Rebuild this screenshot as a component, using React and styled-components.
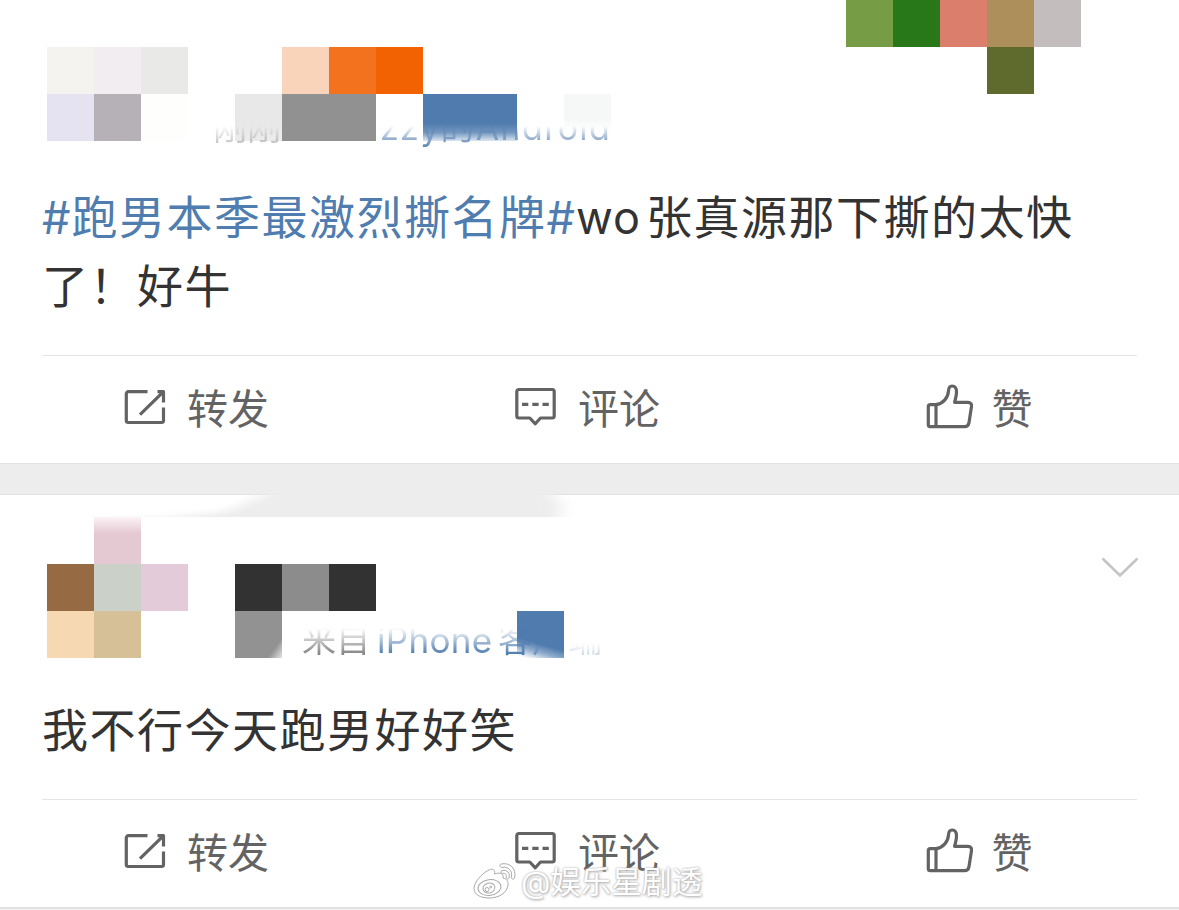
import styled, { createGlobalStyle } from 'styled-components';

const GlobalStyle = createGlobalStyle`
  * {
    box-sizing: border-box;
  }
  body {
    margin: 0;
    background: #fff;
    font-family: Inter, 'Noto Sans CJK SC', sans-serif;
    color: #333;
  }
`;

const Feed = styled.main`
  position: relative;
  width: 1179px;
  height: 910px;
  overflow: hidden;
  background: #fff;
`;
const Post = styled.article`
  display: flex;
  flex-direction: column;
`;
const Divider = styled.div`
  height: 32px;
  background: #ededed;
  border-top: 1px solid #e2e2e2;
  border-bottom: 1px solid #e2e2e2;
`;
const BottomEdge = styled.div`
  height: 4px;
  background: #f2f2f2;
  border-top: 2px solid #e2e2e2;
`;

const Header = styled.header`
  position: relative;
  height: ${(props) => props.$height}px;
  padding-top: ${(props) => props.$top || 0}px;
`;
const Mosaic = styled.div`
  display: grid;
  grid-template-columns: repeat(25, 47px);
  grid-template-rows: repeat(3, 47px);
`;
const Cell = styled.span`
  grid-column: ${(props) => props.$col} / span ${(props) => props.$span || 1};
  grid-row: ${(props) => props.$row};
  background: ${(props) => props.$color};
`;
const Smudge = styled.div`
  position: absolute;
  top: -1px;
  left: 0;
  width: 600px;
  height: 23px;
  overflow: hidden;

  svg {
    display: block;
  }
`;
const Source = styled.div`
  position: absolute;
  top: ${(props) => props.$top}px;
  left: ${(props) => props.$left}px;
  display: flex;
  height: 40px;
  line-height: 40px;
  font-size: 34px;
  white-space: pre;
  color: #858585;
  mask-image: linear-gradient(
    to bottom,
    transparent ${(props) => props.$from}px,
    #000 ${(props) => props.$to}px
  );
`;
const SourcePart = styled.span`
  width: ${(props) => props.$width}px;
  font-size: ${(props) => props.$size || 34}px;
  color: ${(props) => (props.$link ? '#4f7bae' : 'inherit')};
  opacity: ${(props) => props.$opacity ?? 1};
  letter-spacing: ${(props) => props.$spacing || 0}px;
`;
const FadedPart = styled(SourcePart)`
  mask-image: linear-gradient(to bottom, transparent 22px, #000 40px);
`;
const Menu = styled.button`
  position: absolute;
  top: 60px;
  right: 39px;
  padding: 0;
  border: 0;
  background: none;

  svg {
    display: block;
  }
`;

const Text = styled.p`
  margin: 0 42px;
  padding-bottom: ${(props) => props.$bottom}px;
  border-bottom: 1px solid #e4e4e4;
  font-size: 46px;
  line-height: 69px;
  letter-spacing: 1.5px;
  white-space: nowrap;
`;
const Topic = styled.a`
  color: #507daf;
`;
const Latin = styled.span`
  margin-right: ${(props) => props.$after || 0}px;
  font-size: 45px;
  letter-spacing: 1px;
`;

const Actions = styled.footer`
  display: grid;
  grid-template-columns: repeat(3, 391px);
  height: 107px;
  padding: 0 0 5px 1px;
`;
const Action = styled.button`
  display: flex;
  align-items: center;
  justify-content: center;
  gap: ${(props) => props.$gap || 21}px;
  padding: 0;
  border: 0;
  background: none;
  color: #636363;
  font-family: inherit;
  font-size: 41px;
  line-height: 56px;

  svg {
    fill: none;
    stroke: currentColor;
    stroke-width: 3.2;
    stroke-linejoin: round;
  }
`;
const ActionLabel = styled.span`
  padding-top: 3px;
`;

const Watermark = styled.div`
  position: absolute;
  left: 472px;
  top: 861px;
  display: flex;
  align-items: center;
  gap: 3px;
  height: 42px;
  font-size: 30.4px;
  line-height: 42px;
  color: #fff;
  text-shadow: 0 0 2px #aaa, 1px 1px 3px #aaa;
`;

const RepostIcon = () => (
  <svg width="42" height="38" viewBox="0 0 42 38">
    <path d="M23.5 3.7H4.3a2 2 0 0 0-2 2v26.8a2 2 0 0 0 2 2h33.2a2 2 0 0 0 2-2V19.5" />
    <path d="M33.5 3.7h6v10.8M39 4.2 16 26.7" />
  </svg>
);

const CommentIcon = () => (
  <svg width="42" height="40" viewBox="0 0 42 40">
    <path d="M3.800 2.500h33.400a2 2 0 0 1 2 2V29a2 2 0 0 1-2 2H25.500l-5.200 5.800L14.800 31h-11a2 2 0 0 1-2-2V4.500a2 2 0 0 1 2-2Z" />
    <path d="M7 17.300h6.300M17.300 17.300h6.300M27.500 17.300h6.300" />
  </svg>
);

const LikeIcon = () => (
  <svg width="48" height="46" viewBox="0 0 48 46">
    <path d="M11 20.7H5.3a2 2 0 0 0-2 2v18a2 2 0 0 0 2 2h34.5c2.2 0 3.6-1.3 4.1-3.5l2.6-16.6c.3-2.8-1-4.3-3.5-4.3H29.6c1-3.6 1.9-7 1.9-10.3 0-3.7-1.6-6-4.4-6-2.6 0-3.4 2-3.6 4.8C23 13.7 18.5 19.5 11 20.7Z" />
    <path d="M11 20.7v22" />
  </svg>
);

const WeiboIcon = () => (
  <svg width="46" height="42" viewBox="0 0 46 42" fill="#fff" stroke="#aaa" strokeWidth="1">
    <path d="M17 9c4-2 6.5 0 5.5 4 6-2 9.500-.5 8.500 4 4 1 5.500 3.500 5 7-1 8-9 13-19 13C8.500 37 2 33.500 2 27.500 2 21.500 9.500 12.500 17 9Z" />
    <ellipse cx="17.5" cy="26.5" rx="11.5" ry="7.8" transform="rotate(-8 17.5 26.5)" />
    <ellipse cx="17" cy="27" rx="6" ry="5" transform="rotate(-15 17 27)" />
    <circle cx="15" cy="28.5" r="2" />
    <circle cx="18.8" cy="26" r="1" />
    <path d="M29 3c9-2 16 5 13.500 14-.8 2-3.800 1-3.200-1C41 10 36 5 30 6.500c-2 .3-3-2.800-1-3.500Z" />
    <path d="M30 9.500c5-1 8.500 2.500 7 7.500-.6 1.800-3 1-2.700-.8.600-2.600-1-4.300-3.600-3.900-1.800.2-2.500-2.300-.7-2.800Z" />
  </svg>
);

const firstCells = [
  { col: 19, row: 1, color: '#779c46' },
  { col: 20, row: 1, color: '#28781a' },
  { col: 21, row: 1, color: '#dc7e6c' },
  { col: 22, row: 1, color: '#ad8f5b' },
  { col: 23, row: 1, color: '#c4bdbe' },
  { col: 22, row: 2, color: '#5f6a2d' },
  { col: 2, row: 2, color: '#f4f3ef' },
  { col: 3, row: 2, color: '#f2edf0' },
  { col: 4, row: 2, color: '#e9e9e8' },
  { col: 7, row: 2, color: '#fad3bb' },
  { col: 8, row: 2, color: '#f3721e' },
  { col: 9, row: 2, color: '#f26202' },
  { col: 2, row: 3, color: '#e5e3f2' },
  { col: 3, row: 3, color: '#b6b0b7' },
  { col: 4, row: 3, color: '#fefefc' },
  { col: 6, row: 3, color: 'linear-gradient(#e8e8e8 65%, #ececec)' },
  { col: 7, row: 3, span: 2, color: '#919191' },
  { col: 10, row: 3, span: 2, color: 'linear-gradient(#4f7bae 62%, #7497c0 82%, #dbe5f0)' },
  { col: 13, row: 3, color: 'linear-gradient(#f6f8f7 55%, #fff 80%)' },
];

const secondCells = [
  { col: 3, row: 1, color: 'linear-gradient(#fbf3f6, #e4c9d3 35%)' },
  { col: 2, row: 2, color: '#966a42' },
  { col: 3, row: 2, color: '#cbd0c9' },
  { col: 4, row: 2, color: '#e4cbda' },
  { col: 6, row: 2, color: '#323232' },
  { col: 7, row: 2, color: '#8c8c8c' },
  { col: 8, row: 2, color: '#323232' },
  { col: 2, row: 3, color: '#f6d9b2' },
  { col: 3, row: 3, color: '#d6c098' },
  { col: 6, row: 3, color: 'linear-gradient(125deg, #929292 82%, #e4e4e4)' },
  { col: 12, row: 3, color: 'linear-gradient(16deg, #fff 4%, #8eabcd 20%, #4f7bae 34%)' },
];

const MosaicCells = ({ cells }) => (
  <Mosaic>
    {cells.map((cell) => (
      <Cell
        key={`${cell.col}-${cell.row}`}
        $col={cell.col}
        $row={cell.row}
        $span={cell.span}
        $color={cell.color}
      />
    ))}
  </Mosaic>
);

const PostActions = () => (
  <Actions>
    <Action type="button">
      <RepostIcon />
      <ActionLabel>转发</ActionLabel>
    </Action>
    <Action type="button">
      <CommentIcon />
      <ActionLabel>评论</ActionLabel>
    </Action>
    <Action type="button" $gap={19}>
      <LikeIcon />
      <ActionLabel>赞</ActionLabel>
    </Action>
  </Actions>
);

const App = () => {
  return (
    <Feed>
      <GlobalStyle />
      <Post>
        <Header $height={183}>
          <MosaicCells cells={firstCells} />
          <Source $top={108} $left={213} $from={18} $to={40}>
            <SourcePart $width={167} $opacity={0.6}>刚刚</SourcePart>
            <SourcePart $link $width={250} $spacing={1.3}>
              zzy的Android
            </SourcePart>
          </Source>
        </Header>
        <Text $bottom={34}>
          <Topic>
            <Latin>#</Latin>跑男本季最激烈撕名牌<Latin>#</Latin>
          </Topic>
          <Latin $after={5}>wo</Latin>张真源那下撕的太快
          <br />
          了！好牛
        </Text>
        <PostActions />
      </Post>
      <Divider />
      <Post>
        <Header $height={201} $top={22}>
          <Smudge>
            <svg width="600" height="23" viewBox="0 0 600 23">
              <defs>
                <filter id="soft" x="-10%" y="-60%" width="120%" height="220%">
                  <feGaussianBlur stdDeviation="9 3" />
                </filter>
              </defs>
              <path d="M60 27 150 25 225 18 290-10H540L560 8V40H220Z" fill="#ededed" filter="url(#soft)" />
            </svg>
          </Smudge>
          <MosaicCells cells={secondCells} />
          <Source $top={125} $left={302} $from={8} $to={34}>
            <SourcePart $width={75}>来自</SourcePart>
            <SourcePart $link $width={121} $size={35} $spacing={0.3}>
              iPhone
            </SourcePart>
            <SourcePart $link $width={34}>客</SourcePart>
            <FadedPart $link $width={36}>户</FadedPart>
            <FadedPart $link $width={40} $opacity={0.4}>端</FadedPart>
          </Source>
          <Menu type="button" aria-label="更多">
            <svg width="40" height="26" viewBox="0 0 40 26" fill="none" stroke="#c4c4c4" strokeWidth="2.6">
              <path d="m2.500 3.500 17.500 17 17.500-17" />
            </svg>
          </Menu>
        </Header>
        <Text $bottom={34}>我不行今天跑男好好笑</Text>
        <PostActions />
      </Post>
      <BottomEdge />
      <Watermark>
        <WeiboIcon />
        @娱乐星剧透
      </Watermark>
    </Feed>
  );
};

export default App;
